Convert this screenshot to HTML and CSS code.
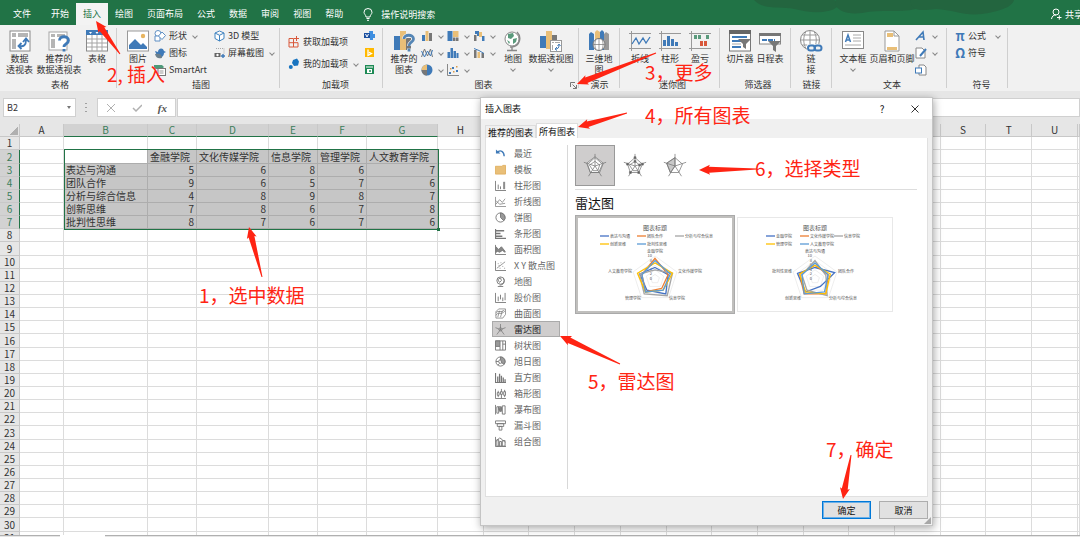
FILE: index.html
```html
<!DOCTYPE html>
<html lang="zh-CN">
<head>
    <meta charset="utf-8">
    <title>插入图表</title>
    <link rel="stylesheet" href="styles.css">
</head>
<body>
<header class="titlebar">
    <svg class="swirl" viewBox="0 0 330 25" width="330" height="25">
        <path d="M4 0h80c8 4 3 9-6 11-12 3-24 0-34-2-12-3-30 2-40-9z"/>
        <path d="M86 0h110c-5 5-16 8-30 9-18 4-34 0-54 4-12 2-30-2-26-13z"/>
        <path d="M160 0h104c-2 8-18 12-32 14-18 2-28-4-46-5-18 2-24 2-26-9z"/>
    </svg>
    <nav class="tabs">
        <a href="#" class="file">文件</a>
        <a href="#">开始</a>
        <a href="#" class="active">插入</a>
        <a href="#">绘图</a>
        <a href="#">页面布局</a>
        <a href="#">公式</a>
        <a href="#">数据</a>
        <a href="#">审阅</a>
        <a href="#">视图</a>
        <a href="#">帮助</a>
    </nav>
    <a href="#" class="tell-me">
        <svg width="10" height="13" viewBox="0 0 10 13" fill="none" stroke="#fff"><path d="M3 9C3 7 1 6 1 4.300a4 3.800 0 0 1 8 0C9 6 7 7 7 9zM3.500 10.500h3M4 12.300h2"/></svg>
        操作说明搜索
    </a>
    <a href="#" class="share">
        <svg width="11" height="12" viewBox="0 0 11 12" fill="none" stroke="#fff"><circle cx="5" cy="4" r="3"/><path d="M.5 11c.5-3 2-4 4.500-4M6 9.500h4.500M8.300 7.300v4.400"/></svg>
        共享
    </a>
</header>

<section class="ribbon">
    <div class="group g-table">
        <div class="tools">
            <button class="big w33">
                <svg width="22" height="22" viewBox="0 0 22 22"><rect x="1" y="1" width="20" height="20" fill="#fff" stroke="#8a8a8a"/><path d="M3 3h4v4H3zM9 3h10v4H9zM3 9h4v10H3z" fill="#b5b5b5"/><path d="M10 16c5 1 7-1 7-6M12.500 13l-3 3 3 3M14 12l3-3.500 3 3.500" fill="none" stroke="#3f7ab8" stroke-width="1.800"/></svg>
                <span>数据<br>透视表</span>
            </button>
            <button class="big w46">
                <svg width="22" height="22" viewBox="0 0 22 22"><rect x="1" y="2" width="18" height="18" fill="#fff" stroke="#a5a5a5"/><path d="M3 4h4v3H3zM9 4h8v3H9zM3 9h4v9H3z" fill="#b5b5b5"/><path d="M11.500 10.500c0-5 9-5 9 0 0 3.500-4.500 3-4.500 6.500M16 19v2.500" fill="none" stroke="#3f7ab8" stroke-width="2.800"/></svg>
                <span>推荐的<br>数据透视表</span>
            </button>
            <button class="big w30">
                <svg width="22" height="22" viewBox="0 0 22 22"><rect x=".5" y="1" width="21" height="20" fill="#fff" stroke="#8a8a8a"/><path d="M0 0h22v5H0z" fill="#3f7ab8"/><path d="M1 9h20M1 13h20M1 17h20M6 5v16M11 5v16M16 5v16" stroke="#a5a5a5"/><path d="M3 2l1.500 2L6 2zM9.500 2L11 4l1.500-2zM16 2l1.500 2L19 2z" fill="#fff"/></svg>
                <span>表格</span>
            </button>
        </div>
        <h2>表格</h2>
    </div>

    <div class="group g-picture">
        <div class="tools">
            <button class="big menu w32">
                <svg width="22" height="22" viewBox="0 0 22 22"><rect x=".5" y="1" width="21" height="20" fill="#fff" stroke="#999"/><path d="M2 19v-4l6-6 6 6 2-2 4 4v2z" fill="#3f7ab8"/><circle cx="16" cy="6" r="2.200" fill="#e8b560"/></svg>
                <span>图片</span>
            </button>
            <div class="stack col-shapes">
                <button class="small menu"><svg width="12" height="12" viewBox="0 0 12 12" fill="#fff" stroke="#5e8fc4"><circle cx="4" cy="3.500" r="3"/><path d="M1 6h5v5H1z"/><path d="M8 2l3.500 3.500L8 9.500 4.500 6z"/></svg>形状</button>
                <button class="small"><svg width="12" height="12" viewBox="0 0 12 12"><path d="M1 4l3 1c0-4 5-5 6-1l2 1-2 1c0 4-4 6-7 3z" fill="#3f7ab8"/><path d="M1 7c4-1 7 0 7 4-4 1-6 0-7-4z" fill="#6b7f8c"/></svg>图标</button>
                <button class="small"><svg width="12" height="12" viewBox="0 0 12 12"><path d="M0 1h8l2 2-2 2H0z" fill="#4f9a7a"/><rect x="4" y="4.500" width="7.500" height="7" fill="#fff" stroke="#777"/><path d="M5.500 7h4M5.500 9h4" stroke="#999"/></svg>SmartArt</button>
            </div>
            <div class="stack">
                <button class="small"><svg width="11" height="12" viewBox="0 0 11 12" fill="#fff" stroke="#3f83c0"><path d="M5.500 1l4.500 2v5.500l-4.500 2.500L1 8.500V3zM1 3l4.500 2.300L10 3M5.500 5.300V11"/></svg>3D 模型</button>
                <button class="small menu"><svg width="11" height="12" viewBox="0 0 11 12"><path d="M2 1.500h8v6" fill="none" stroke="#aaa" stroke-dasharray="1 1"/><path d="M.5 6h6v4h-6z" fill="#666"/><circle cx="3.500" cy="8" r="1.200" fill="#fff"/><path d="M7 9h4M9 7v4" stroke="#3f7ab8" stroke-width="1.400"/></svg>屏幕截图</button>
            </div>
        </div>
        <h2>插图</h2>
    </div>

    <div class="group g-addin">
        <div class="tools">
            <div class="stack roomy col-addin">
                <button class="small"><svg width="12" height="12" viewBox="0 0 12 12" fill="none" stroke="#d9583b"><path d="M1 2.500h4.500V11H1zM1 6.700h9V11H5.500M8.500 0v5M6 2.500h5"/></svg>获取加载项</button>
                <button class="small menu"><svg width="12" height="12" viewBox="0 0 12 12" fill="#1874c0"><path d="M5 2l4-1.500 2 3-1 4-4 .500-2-3z"/><circle cx="2.800" cy="9" r="2"/></svg>我的加载项</button>
            </div>
            <div class="stack">
                <button class="small" aria-label="Visio"><svg width="11" height="11" viewBox="0 0 11 11"><path d="M5 1h4v3h2v4H9v2H6z" fill="#3f8fe0"/><path d="M0 3h6v5H0z" fill="#1a4fa0"/><path d="M1.500 4L3 7l1.500-3" fill="none" stroke="#fff"/></svg></button>
                <button class="small" aria-label="Bing"><svg width="11" height="11" viewBox="0 0 11 11"><path d="M1 1h9v9H1z" fill="#ffb900"/><path d="M4 2.500v6l3.500-2L5 5.300" fill="none" stroke="#fff" stroke-width="1.300"/></svg></button>
                <button class="small" aria-label="人员图"><svg width="11" height="11" viewBox="0 0 11 11"><path d="M1 1h9v9H1z" fill="#1e8a55"/><path d="M2 3h7" stroke="#fff"/><path d="M3 5h5v4H3z" fill="#fff"/><circle cx="6" cy="7" r="1" fill="#1e8a55"/></svg></button>
            </div>
        </div>
        <h2>加载项</h2>
    </div>

    <div class="group g-chart">
        <div class="tools">
            <button class="big w32">
                <svg width="22" height="22" viewBox="0 0 22 22"><path d="M1 6h6v14H1z" fill="#3f7ab8"/><path d="M7 1h6v19H7z" fill="#e9bf78"/><path d="M13 8h5v12h-5z" fill="#777"/><path d="M11 9c0-5 9.500-5 9.500 0 0 3.500-4.500 3-4.500 7M16 18.500v3" fill="none" stroke="#f1f1f1" stroke-width="4"/><path d="M11 9c0-5 9.500-5 9.500 0 0 3.500-4.500 3-4.500 7M16 18.500v3" fill="none" stroke="#5485b5" stroke-width="2.800"/></svg>
                <span>推荐的<br>图表</span>
            </button>
            <div class="chart-kinds">
                <button class="small menu" aria-label="柱形图"><svg width="12" height="12" viewBox="0 0 12 12"><path d="M1 5h3v6H1z" fill="#3f7ab8"/><path d="M4.500 1h3v10h-3z" fill="#e9bf78"/><path d="M8 3h3v8H8z" fill="#777"/></svg></button>
                <button class="small menu" aria-label="层次结构图"><svg width="12" height="12" viewBox="0 0 12 12"><path d="M.5 1h5v10h-5z" fill="#3f7ab8"/><path d="M6 1h5.500v6H6z" fill="#e9bf78"/><path d="M6 7.500h2.500V11H6zM9 7.500h2.500V11H9z" fill="#777"/></svg></button>
                <button class="small menu" aria-label="瀑布图"><svg width="12" height="12" viewBox="0 0 12 12"><path d="M1 5h2.500v6H1z" fill="#777"/><path d="M2 1h4v5H4V4H2z" fill="#3f7ab8"/><path d="M6 2h3v5H6z" fill="#e9bf78"/><path d="M9 6h2.500v5H9z" fill="#3f7ab8"/></svg></button>
                <button class="small menu" aria-label="折线图"><svg width="12" height="12" viewBox="0 0 12 12" fill="none"><path d="M.5 10l3-8 3 7 3-7 2 8" stroke="#777"/><path d="M.5 4l3 6 3-6 3 5 2-6" stroke="#3f7ab8"/></svg></button>
                <button class="small menu" aria-label="统计图"><svg width="12" height="12" viewBox="0 0 12 12"><path d="M.5 5H3v6H.500zM3.500 1H6v10H3.500zM6.500 4H9v7H6.500zM9.500 6h2v5h-2z" fill="#3f7ab8"/></svg></button>
                <button class="small menu" aria-label="组合图"><svg width="12" height="12" viewBox="0 0 12 12"><path d="M1 3h2.500v8H1zM8.500 6H11v5H8.500z" fill="#777"/><path d="M4.500 5H7v6H4.500z" fill="#e9bf78"/><path d="M1 1.500l5 2 5 3" fill="none" stroke="#3f7ab8"/></svg></button>
                <button class="small menu" aria-label="饼图"><svg width="12" height="12" viewBox="0 0 12 12"><circle cx="6" cy="6" r="5.500" fill="#3f7ab8"/><path d="M6 6V.500A5.500 5.500 0 0 0 .500 6z" fill="#e9bf78"/><path d="M6 6H.500A5.500 5.500 0 0 0 6 11.500z" fill="#777"/></svg></button>
                <button class="small menu" aria-label="散点图"><svg width="12" height="12" viewBox="0 0 12 12"><path d="M.5 0v11.500H12" fill="none" stroke="#888"/><path d="M2 8h2v2H2zM5 3h2v2H5zM9 6h2v2H9z" fill="#3f7ab8"/><path d="M3 4h1.500v1.500H3zM6 7h1.500v1.500H6zM9 2h1.500v1.500H9z" fill="#d99a48"/></svg></button>
            </div>
            <button class="big menu w28">
                <svg width="22" height="22" viewBox="0 0 22 22"><circle cx="10" cy="9" r="7" fill="#fff" stroke="#888"/><path d="M6 4l5-1 1 3-3 3-3-1zM11 9l4-1-1 4-3 2zM5 10l3 2-1 2z" fill="#5a9a7c"/><path d="M15 2c5 5 3 14-5 15H8M10 17v3M5 20.500h10" fill="none" stroke="#888" stroke-width="1.400"/></svg>
                <span>地图</span>
            </button>
            <button class="big menu w48">
                <svg width="24" height="22" viewBox="0 0 24 22"><path d="M1 6h6v12H1z" fill="#3f7ab8"/><path d="M7 1h6v18H7z" fill="#e9bf78"/><path d="M13 5h5v7h-5z" fill="#777"/><rect x="11.500" y="10.500" width="11" height="11" fill="#fff" stroke="#999"/><path d="M13 12.500h2M16 12.500h5M13.500 15v5" stroke="#aaa"/><path d="M16 19c3 0 4-1 4-4M18 17l-2 2 2 1.500M18.500 16l1.500-2 1.500 2" fill="none" stroke="#3f7ab8"/></svg>
                <span>数据透视图</span>
            </button>
        </div>
        <h2>图表</h2>
        <button class="launcher" aria-label="查看所有图表"><svg width="7" height="7" viewBox="0 0 7 7" fill="none" stroke="#777"><path d="M.5 5V.500H5M2.500 2.500l4 4M6.500 3v3.500H3"/></svg></button>
    </div>

    <div class="group g-tour">
        <div class="tools">
            <button class="big w40">
                <svg width="22" height="22" viewBox="0 0 22 22"><path d="M1 4l2-2 3 2v16H1z" fill="#3f7ab8"/><path d="M7 2l2-2 3 2v16H7z" fill="#e9bf78"/><path d="M12 2l2-2 2 2v18h-4z" fill="#3f7ab8"/><path d="M16 4l2-2 3 2v16h-5z" fill="#999"/><circle cx="11" cy="14.500" r="6" fill="#fff" stroke="#777"/><path d="M5 14.500h12M11 8.500v12M8 9.500c-1.500 3-1.500 7 0 10M14 9.500c1.500 3 1.500 7 0 10" fill="none" stroke="#777" stroke-width=".7"/></svg>
                <span>三维地<br>图</span>
            </button>
        </div>
        <h2>演示</h2>
    </div>

    <div class="group g-spark">
        <div class="tools">
            <button class="big w30">
                <svg width="22" height="22" viewBox="0 0 22 22" fill="none"><path d="M2.500 1v20M0 3.500h22M0 18.500h22" stroke="#999"/><path d="M3 14l4-6 3 6 4-6 3 5 4-6" stroke="#3f7ab8" stroke-width="1.300"/></svg>
                <span>折线</span>
            </button>
            <button class="big w30">
                <svg width="22" height="22" viewBox="0 0 22 22"><path d="M2.500 1v20M0 3.500h22M0 18.500h22" stroke="#999"/><path d="M4 10h3v6H4zM8 6h3v10H8zM12 9h3v7h-3zM16 12h3v4h-3z" fill="#3f7ab8"/></svg>
                <span>柱形</span>
            </button>
            <button class="big w30">
                <svg width="22" height="22" viewBox="0 0 22 22"><path d="M2.500 1v20M0 3.500h22M0 18.500h22" stroke="#999"/><path d="M5 5h3v4H5zM9 5h3v4H9zM17 5h3v4h-3z" fill="#5a9a7c"/><path d="M11 11h3v5h-3zM15 11h3v5h-3z" fill="#d9583b"/></svg>
                <span>盈亏</span>
            </button>
        </div>
        <h2>迷你图</h2>
    </div>

    <div class="group g-filter">
        <div class="tools">
            <button class="big w30">
                <svg width="22" height="22" viewBox="0 0 22 22"><rect x=".5" y="1" width="21" height="20" fill="#fff" stroke="#777"/><path d="M0 0h22v4H0z" fill="#666"/><path d="M3 7h15M3 11h9M3 17h9" stroke="#3f7ab8" stroke-width="2"/><path d="M3 14h9" stroke="#aaa"/><path d="M9 9h13l-5 5v5l-3-2v-3z" fill="#777"/></svg>
                <span>切片器</span>
            </button>
            <button class="big w30">
                <svg width="22" height="22" viewBox="0 0 22 22"><rect x=".5" y="5" width="21" height="9" fill="#fff" stroke="#888"/><path d="M0 3h22v3H0z" fill="#777"/><path d="M3 10h13" stroke="#3f7ab8" stroke-width="2" stroke-dasharray="5 1"/><path d="M9 11h13l-5 5v6l-3-2v-4z" fill="#777"/></svg>
                <span>日程表</span>
            </button>
        </div>
        <h2>筛选器</h2>
    </div>

    <div class="group g-link">
        <div class="tools">
            <button class="big w40">
                <svg width="24" height="22" viewBox="0 0 24 22" fill="none"><circle cx="11" cy="10" r="9.500" fill="#fff" stroke="#888"/><path d="M1.500 10h19M11 .500v19M3.500 5h15M3.500 15h15M7 1.500c-3 5-3 12 0 17M15 1.500c3 5 3 12 0 17" stroke="#999"/><path d="M8 14h16v8H8z" fill="#f1f1f1"/><rect x="9" y="15.500" width="7" height="5" rx="2.500" stroke="#3f7ab8" stroke-width="2"/><rect x="15.500" y="15.500" width="7" height="5" rx="2.500" stroke="#3f7ab8" stroke-width="2"/></svg>
                <span>链<br>接</span>
            </button>
        </div>
        <h2>链接</h2>
    </div>

    <div class="group g-text">
        <div class="tools">
            <button class="big menu w32">
                <svg width="22" height="22" viewBox="0 0 22 22"><rect x=".5" y="1.500" width="21" height="17" fill="#fff" stroke="#888"/><path d="M3.500 12l2.500-7 2.500 7M4.500 10h3" fill="none" stroke="#3f7ab8" stroke-width="1.500"/><path d="M11 5h8M11 8h8M11 11h8M3 15h16" stroke="#aaa"/></svg>
                <span>文本框</span>
            </button>
            <button class="big w46">
                <svg width="22" height="22" viewBox="0 0 22 22"><path d="M4 1h9l5 5v15H4z" fill="#fff" stroke="#999"/><path d="M6 3h6v4H6zM6 17h10v3H6z" fill="#e9bf78"/><path d="M13 1v5h5" fill="none" stroke="#999"/></svg>
                <span>页眉和页脚</span>
            </button>
            <div class="stack">
                <button class="small menu" aria-label="艺术字"><svg width="12" height="12" viewBox="0 0 12 12" fill="none" stroke="#3f7ab8"><path d="M1 10l7-8 1 8M4 7h5" stroke-width="1.600"/></svg></button>
                <button class="small menu" aria-label="签名行"><svg width="12" height="12" viewBox="0 0 12 12"><path d="M1 1h6l3 3v7H1z" fill="#fff" stroke="#888"/><path d="M5 9l6-7" stroke="#3f7ab8" stroke-width="2"/></svg></button>
                <button class="small" aria-label="对象"><svg width="12" height="12" viewBox="0 0 12 12"><path d="M4 1h5l2 2v8H4z" fill="#fff" stroke="#888"/><rect x=".5" y="4" width="6" height="5" fill="#fff" stroke="#3f7ab8"/></svg></button>
            </div>
        </div>
        <h2>文本</h2>
    </div>

    <div class="group g-symbol">
        <div class="tools">
            <div class="stack">
                <button class="small menu wide"><b>π</b>公式</button>
                <button class="small"><b>Ω</b>符号</button>
            </div>
        </div>
        <h2>符号</h2>
    </div>
</section>

<section class="formula-bar">
    <div class="name-box"><input type="text" value="B2" aria-label="名称框"></div>
    <div class="dots"></div>
    <div class="fx">
        <button aria-label="取消"><svg width="10" height="10" viewBox="0 0 10 10" stroke="#b0b0b0"><path d="M1 1l8 8M9 1L1 9"/></svg></button>
        <button aria-label="输入"><svg width="10" height="10" viewBox="0 0 10 10" fill="none" stroke="#b0b0b0" stroke-width="1.500"><path d="M1 5l3 3 6-6"/></svg></button>
        <button class="fn">fx</button>
    </div>
    <input type="text" class="formula" aria-label="编辑栏">
</section>

<main class="sheet">
    <table id="grid"></table>
    <div class="selection"></div>
</main>
<footer class="sheet-tabs"><span></span></footer>

<div class="dialog" role="dialog" aria-label="插入图表">
    <div class="dialog-title">
        <span>插入图表</span>
        <button aria-label="帮助">?</button>
        <button aria-label="关闭"><svg width="8" height="8" viewBox="0 0 8 8" stroke="#333"><path d="M.5.500l7 7M7.500.500l-7 7"/></svg></button>
    </div>
    <div class="dialog-tabs">
        <button>推荐的图表</button>
        <button class="active">所有图表</button>
    </div>
    <div class="panel">
        <ul class="kinds">
            <li><button><svg viewBox="0 0 12 12"><path d="M2 5c4-4 8-1 8 4" stroke="#3f7ab8" stroke-width="1.500"/><path d="M1 1.500V6h5z" fill="#3f7ab8" stroke="none"/></svg>最近</button></li>
            <li><button><svg viewBox="0 0 12 12"><path d="M.5 2.500h7l1-1h3v9.500H.500z" fill="#e9bf78" stroke="#e0b060"/></svg>模板</button></li>
            <li><button><svg viewBox="0 0 12 12"><path d="M.5 1v10.500H12M3.500 5v5M6 7v3M9.500 2v8"/><path d="M10.500 2v8"/></svg>柱形图</button></li>
            <li><button><svg viewBox="0 0 12 12"><path d="M.5 1v10.500H12M1 9l4-5 3 3 3-4M1 5l4 4 6-1" stroke-width=".8"/></svg>折线图</button></li>
            <li><button><svg viewBox="0 0 12 12"><circle cx="6" cy="6" r="5"/><path d="M6 6V1a5 5 0 0 1 3.500 8.500z" fill="#999"/></svg>饼图</button></li>
            <li><button><svg viewBox="0 0 12 12"><path d="M.5 1v10.500H12M1 3h9M1 6h5M1 9h7" stroke-width="1.500"/></svg>条形图</button></li>
            <li><button><svg viewBox="0 0 12 12"><path d="M.5 1v10.500H12"/><path d="M1 9V3l3 3 3-3 4 5v1L8 7 5 9 3 8z" fill="#888"/></svg>面积图</button></li>
            <li><button><svg viewBox="0 0 12 12"><path d="M.5 1v10.500H12"/><path d="M2 9l9-7M3 4h1M6 3h1M5 9h1M8 7h1M10 9h1M4 6h1" stroke-width=".8"/></svg>X Y 散点图</button></li>
            <li><button><svg viewBox="0 0 12 12"><circle cx="6" cy="5" r="4"/><path d="M3 4l3-2 1 3-2 2zM9 2c3 4 0 8-4 8M3 11.500h6"/></svg>地图</button></li>
            <li><button><svg viewBox="0 0 12 12"><path d="M.5 1v10.500H12M3.500 5v5M6 3v5M8.500 6v4M11 1v8"/></svg>股价图</button></li>
            <li><button><svg viewBox="0 0 12 12"><path d="M1 4l3-3h7.500v6l-3 4H1zM1 8c3-5 5 1 10-5M1 5c3-3 6 1 9-3M3 10l2-7M6 10l2-7" stroke-width=".8"/></svg>曲面图</button></li>
            <li><button class="active"><svg viewBox="0 0 12 12"><path d="M6 0v6L.500 4M6 6l5.500-2M6 6l-4 5.500M6 6l4 5.500M6 3.500l2 2-1 2H5l-1-2z" stroke-width=".8"/></svg>雷达图</button></li>
            <li><button><svg viewBox="0 0 12 12"><path d="M.5 1h11v10H.500z"/><path d="M.5 1h5v6h-5z" fill="#999"/><path d="M5.500 7v4M8.500 1v10M8.500 4.500h3"/></svg>树状图</button></li>
            <li><button><svg viewBox="0 0 12 12"><circle cx="6" cy="6" r="5"/><circle cx="6" cy="6" r="2"/><path d="M6 1a5 5 0 0 1 4 8L7.500 7.500 6 4z" fill="#999"/><path d="M1 6h3M3 10l2-2"/></svg>旭日图</button></li>
            <li><button><svg viewBox="0 0 12 12"><path d="M.5 1v10.500H12M3 5v6M5 2v9M7 4v7M9 6v5M11 8v3" stroke-width="1.400"/></svg>直方图</button></li>
            <li><button><svg viewBox="0 0 12 12"><path d="M.5 1v10.500H12M3.500 3v7M7 1v10M10.500 2v8"/><path d="M2.500 5h2v3h-2zM6 4h2v3H6zM9.500 4h2v4h-2z" fill="#fff"/></svg>箱形图</button></li>
            <li><button><svg viewBox="0 0 12 12"><path d="M.5 1v10.500M2 3h2v7H2zM4 3h3v3H4zM8 2h3v9H8z"/><path d="M5 4h2v4H5z" fill="#888"/></svg>瀑布图</button></li>
            <li><button><svg viewBox="0 0 12 12"><path d="M.5 1h11v3H.500zM2.500 4h7v3h-7zM4.500 7h3v4h-3z"/></svg>漏斗图</button></li>
            <li><button><svg viewBox="0 0 12 12"><path d="M.5 1v10.500H12M2 4h2v7H2zM5 6h2v5H5zM8 5h3v6H8zM1 6l4-4 3 2 3 3"/></svg>组合图</button></li>
        </ul>
        <div class="detail">
            <div class="types">
                <button class="active" aria-label="雷达图"><svg viewBox="0 0 28 28"><path d="M14 4l9 7-4 10H9L5 11z" fill="#fff"/><path d="M14 1v13M14 14L2 10M14 14l12-4M14 14L7 25M14 14l7 11M14 5l8 7-4 9H9l-3-9zM14 9l5 4-2 6h-5l-4-6z"/></svg></button>
                <button aria-label="带数据标记的雷达图"><svg viewBox="0 0 28 28"><path d="M14 1v13M14 14L2 10M14 14l12-4M14 14L7 25M14 14l7 11M14 5l8 7-4 9H9l-3-9zM14 9l5 4-2 6h-5l-4-6z"/><path d="M13 4h2v2h-2zM21 11h2v2h-2zM17 20h2v2h-2zM8 20h2v2H8zM5 11h2v2H5zM13 8h2v2h-2zM18 12h2v2h-2z" fill="#555"/></svg></button>
                <button aria-label="填充雷达图"><svg viewBox="0 0 28 28"><path d="M14 5v9l-5 7-4-10z" fill="#c8c8c8"/><path d="M14 1v13M14 14L2 10M14 14l12-4M14 14L7 25M14 14l7 11M14 5l8 7-4 9H9l-4-10z"/></svg></button>
            </div>
            <h3>雷达图</h3>
            <div class="previews">
                <button class="active" aria-label="按学院"><svg id="radar1" viewBox="0 0 154 93"></svg></button>
                <button aria-label="按能力"><svg id="radar2" viewBox="0 0 154 93"></svg></button>
            </div>
        </div>
    </div>
    <div class="dialog-buttons">
        <button class="primary">确定</button>
        <button>取消</button>
    </div>
    <div class="grip"></div>
</div>

<svg id="arrows" width="1080" height="537"></svg>
<div class="note n1">1，选中数据</div>
<div class="note n2">2, 插入</div>
<div class="note n3">3，更多</div>
<div class="note n4">4，所有图表</div>
<div class="note n5">5，雷达图</div>
<div class="note n6">6，选择类型</div>
<div class="note n7">7，确定</div>

<script src="script.js"></script>
</body>
</html>
```

FILE: styles.css
```css
* {
  box-sizing: border-box;
}

body {
  margin: 0;
  height: 100vh;
  display: flex;
  flex-direction: column;
  position: relative;
  overflow: hidden;
  background-color: #e6e6e6;
  color: #333;
  font-family: "Noto Sans CJK SC", "Noto Sans", sans-serif;
  font-size: 9px;
  line-height: 11px;
}

button, input {
  font: inherit;
  color: inherit;
  border: 0;
  padding: 0;
  margin: 0;
  background: none;
}

h2, h3, ul {
  margin: 0;
  padding: 0;
  font-weight: normal;
  list-style: none;
}

svg {
  flex: none;
  display: block;
}

a {
  color: #fff;
  text-decoration: none;
}

/* title bar */
.titlebar {
  flex: none;
  display: flex;
  align-items: flex-end;
  height: 25px;
  padding-left: 6px;
  position: relative;
  overflow: hidden;
  background-color: #217346;
}

.swirl {
  position: absolute;
  right: 0;
  top: 0;
  fill: #23653f;
}

.tabs {
  display: flex;
}

.tabs a {
  padding: 0 7px;
  line-height: 22px;
}

.tabs .file {
  margin-right: 6px;
}

.tabs .active {
  background-color: #f3f3f3;
  color: #217346;
}

.tell-me, .share {
  display: flex;
  align-items: center;
  gap: 8px;
  height: 22px;
  margin-left: 13px;
  white-space: nowrap;
  position: relative;
}

.share {
  gap: 3px;
  margin-left: auto;
  margin-right: -3px;
}

/* ribbon */
.ribbon {
  flex: none;
  display: flex;
  height: 66px;
  background-color: #f1f1f1;
}

.group {
  flex: none;
  display: flex;
  flex-direction: column;
  position: relative;
}

.group::after {
  content: "";
  position: absolute;
  right: 0;
  top: 3px;
  bottom: 3px;
  border-right: 1px solid #cfcfcf;
}

.group h2 {
  font-size: 9px;
  text-align: center;
}

.tools {
  display: flex;
  height: 54px;
}

.g-table { width: 117px; padding-left: 3px; }
.g-picture { width: 163px; padding-left: 5px; }
.g-addin { width: 103px; padding-left: 8px; }
.g-chart { width: 196px; padding-left: 5px; }
.g-tour { width: 41px; }
.g-spark { width: 100px; padding-left: 5px; }
.g-filter { width: 71px; padding-left: 5px; }
.g-link { width: 41px; }
.g-text { width: 115px; padding-left: 5px; }
.g-symbol { width: 61px; padding-left: 8px; }

.w28 { width: 28px; }
.w30 { width: 30px; }
.w32 { width: 32px; }
.w33 { width: 33px; }
.w40 { width: 40px; }
.w46 { width: 46px; }
.w48 { width: 48px; }

.big {
  display: flex;
  flex-direction: column;
  align-items: center;
  gap: 1px;
  padding-top: 5px;
  white-space: nowrap;
}

.small {
  display: flex;
  align-items: center;
  gap: 3px;
  height: 17px;
  white-space: nowrap;
}

.small b {
  width: 10px;
  color: #3f7ab8;
  font-size: 13px;
}

.menu::after {
  content: "";
  width: 3px;
  height: 3px;
  margin: 0 3px;
  border: solid #888;
  border-width: 0 1px 1px 0;
  transform: rotate(45deg);
}

.big.menu::after {
  margin-top: 2px;
}

.wide::after {
  margin-left: 7px;
}

.stack {
  padding-top: 2px;
}

.roomy {
  display: flex;
  flex-direction: column;
  gap: 5px;
  padding-top: 8px;
}

.col-shapes { width: 60px; }
.col-addin { width: 76px; }

.chart-kinds {
  display: grid;
  grid-template-columns: repeat(3, 26px);
  grid-auto-rows: 17px;
  padding-top: 2px;
  margin-left: 1px;
}

.launcher {
  position: absolute;
  right: 2px;
  bottom: 2px;
}

/* formula bar */
.formula-bar {
  flex: none;
  display: flex;
  height: 33px;
  padding: 7px 0;
}

.name-box {
  display: flex;
  align-items: center;
  width: 73px;
  margin-left: 3px;
  border: 1px solid #d0d0d0;
  background-color: #fff;
}

.name-box input {
  width: 63px;
  padding-left: 3px;
}

.name-box::after {
  content: "";
  border: 2px solid transparent;
  border-top: 3px solid #777;
  border-bottom: 0;
}

.dots {
  width: 2px;
  margin: 5px 10px 5px 9px;
  background: repeating-linear-gradient(#a0a0a0 0 1px, transparent 1px 4px);
}

.fx {
  display: flex;
  align-items: center;
  justify-content: space-between;
  width: 79px;
  padding: 0 8px;
  border: 1px solid #d0d0d0;
  background-color: #fff;
}

.fn {
  font: italic bold 11px "Liberation Serif", serif;
  color: #555;
}

.formula {
  flex: 1;
  min-width: 0;
  margin-left: 1px;
  border: 1px solid #d0d0d0;
  background-color: #fff;
}

/* sheet */
.sheet {
  flex: 1;
  min-height: 0;
  position: relative;
  overflow: hidden;
  background-color: #fff;
}

#grid {
  width: 100%;
  table-layout: fixed;
  border-spacing: 0;
  font-size: 10px;
  line-height: 12px;
  color: #333;
}

#grid tr {
  height: 13px;
}

#grid tbody tr:nth-child(7n + 2) {
  height: 14px;
}

#grid th, #grid td {
  padding: 0;
  border: solid #dcdcdc;
  border-width: 0 1px 1px 0;
  font-weight: normal;
  white-space: nowrap;
}

#grid th {
  background-color: #e6e6e6;
  border-color: #c8c8c8;
}

#grid .corner {
  background: linear-gradient(135deg, transparent 50%, #b0b0b0 50%) 10px 3px / 8px 8px no-repeat #e6e6e6;
}

#grid .on {
  background-color: #d2d2d2;
  color: #3b7d5b;
}

#grid thead .on {
  border-bottom-color: #217346;
}

#grid tbody .on {
  border-right-color: #217346;
}

#grid .sel {
  background-color: #c6c6c6;
  border-color: #adadad;
  padding: 0 2px;
}

#grid .cur {
  background-color: #fff;
}

#grid .num {
  text-align: right;
}

.selection {
  position: absolute;
  left: 64px;
  top: 25px;
  width: 375px;
  height: 81px;
  border: 1px solid #217346;
}

.selection::after {
  content: "";
  position: absolute;
  right: -2px;
  bottom: -2px;
  width: 3px;
  height: 3px;
  background-color: #217346;
}

.sheet-tabs {
  flex: none;
  height: 2px;
  border-top: 1px solid #b0b0b0;
}

.sheet-tabs span {
  display: block;
  width: 45px;
  height: 2px;
  margin: -1px 0 0 60px;
  background-color: #fff;
}

/* dialog */
.dialog {
  position: absolute;
  left: 480px;
  top: 97px;
  width: 453px;
  display: flex;
  flex-direction: column;
  padding: 0 4px 6px;
  border: 1px solid #c4c4c4;
  background-color: #f0f0f0;
  box-shadow: 1px 2px 8px rgba(0, 0, 0, 0.35);
}

.dialog-title {
  display: flex;
  align-items: center;
  height: 21px;
  margin: 0 -4px;
  padding: 0 4px;
  background-color: #fff;
  color: #111;
}

.dialog-title span {
  flex: 1;
}

.dialog-title button {
  display: flex;
  justify-content: center;
  width: 18px;
  margin: 0 4px 0 11px;
  font-size: 10px;
}

.dialog-tabs {
  display: flex;
  align-items: flex-end;
  height: 19px;
  padding-top: 4px;
  color: #111;
}

.dialog-tabs button {
  height: 13px;
  padding: 0 2px;
  border: 1px solid #ddd;
  border-bottom: 0;
}

.dialog-tabs .active {
  height: 15px;
  background-color: #fff;
}

.panel {
  display: flex;
  height: 359px;
  padding: 7px 10px 7px 6px;
  border: 1px solid #e0e0e0;
  border-top: 0;
  background-color: #fff;
}

.kinds {
  width: 76px;
  border-right: 1px solid #d8d8d8;
  color: #666;
}

.kinds button {
  display: flex;
  align-items: center;
  gap: 8px;
  width: 68px;
  height: 16px;
  padding-left: 2px;
  border: 1px solid transparent;
}

.kinds .active {
  border-color: #aaa;
  background-color: #cfcdcd;
  color: #222;
}

.kinds svg {
  width: 11px;
  height: 11px;
  fill: none;
  stroke: #777;
}

.detail {
  flex: 1;
  padding-left: 7px;
}

.types {
  display: flex;
  height: 45px;
  border-bottom: 1px solid #ddd;
}

.types button {
  display: flex;
  align-items: center;
  justify-content: center;
  width: 40px;
  height: 41px;
  border: 1px solid transparent;
}

.types .active {
  border-color: #999;
  background-color: #cfcdcd;
}

.types svg {
  width: 26px;
  height: 26px;
  fill: none;
  stroke: #777;
  stroke-width: 0.8;
}

h3 {
  padding: 5px 0 4px;
  color: #111;
  font-size: 13px;
  line-height: 16px;
}

.previews {
  display: flex;
  align-items: center;
  gap: 2px;
}

.previews button {
  border: 1px solid #e8e8e8;
}

.previews .active {
  border: 3px solid #c0bfbd;
  outline: 1px solid #aaa;
  outline-offset: -1px;
}

.previews svg {
  width: 154px;
  height: 93px;
  font-size: 4px;
}

.previews text {
  fill: #555;
}

.previews .chart-title {
  font-size: 6px;
}

.dialog-buttons {
  display: flex;
  justify-content: flex-end;
  gap: 8px;
  padding-top: 4px;
  color: #111;
}

.dialog-buttons button {
  width: 49px;
  height: 18px;
  border: 1px solid #adadad;
  background-color: #e1e1e1;
}

.dialog-buttons .primary {
  border-color: #0078d7;
  outline: 1px solid #6cb0e8;
  outline-offset: -2px;
}

.grip {
  position: absolute;
  right: 1px;
  bottom: 1px;
  width: 7px;
  height: 7px;
  background: radial-gradient(#a8a8a8 1px, transparent 1px) 0 0 / 2px 2px;
  clip-path: polygon(100% 0, 100% 100%, 0 100%);
}

/* step notes */
#arrows {
  position: absolute;
  left: 0;
  top: 0;
  fill: #ff2413;
  pointer-events: none;
}

.note {
  position: absolute;
  color: #ff2413;
  font-size: 19px;
  line-height: 24px;
  white-space: nowrap;
}

.n1 { left: 199px; top: 283px; }
.n2 { left: 107px; top: 62px; }
.n3 { left: 645px; top: 60px; }
.n4 { left: 645px; top: 103px; }
.n5 { left: 588px; top: 369px; }
.n6 { left: 755px; top: 156px; }
.n7 { left: 826px; top: 437px; }
```

FILE: script.js
```js
const colleges = ["金融学院", "文化传媒学院", "信息学院", "管理学院", "人文教育学院"];
const skills = ["表达与沟通", "团队合作", "分析与综合信息", "创新思维", "批判性思维"];
const scores = [
    [5, 6, 8, 6, 7],
    [9, 6, 5, 7, 6],
    [4, 8, 9, 8, 7],
    [7, 8, 6, 7, 8],
    [8, 7, 6, 7, 6]
];
const colors = ["#4472c4", "#ed7d31", "#a5a5a5", "#ffc000", "#5b9bd5"];

// Sheet: A-G have their own widths, H-U share the rest, V is cut off
function drawGrid() {
    const letters = "ABCDEFGHIJKLMNOPQRSTUV".split("");
    const widths = [20, 44, 84, 49, 72, 49, 49, 71];
    let html = "<colgroup>";
    for (let c = 0; c <= letters.length; c++) {
        const w = c === letters.length ? 2 : widths[c];
        html += w ? `<col style="width:${w}px">` : "<col>";
    }
    html += "</colgroup><thead><tr><th class='corner'></th>";
    letters.forEach((l, i) => {
        html += `<th class="${i >= 1 && i <= 6 ? "on" : ""}">${l === "V" ? "" : l}</th>`;
    });
    html += "</tr></thead><tbody>";
    for (let r = 1; r <= 31; r++) {
        const inRow = r >= 2 && r <= 7;
        html += `<tr><th class="${inRow ? "on" : ""}">${r}</th>`;
        letters.forEach((l, i) => {
            let cls = "", text = "";
            if (inRow && i >= 1 && i <= 6) {
                cls = "sel";
                if (r === 2 && i === 1) cls = "sel cur";
                else if (r === 2) text = colleges[i - 2];
                else if (i === 1) text = skills[r - 3];
                else {
                    text = scores[r - 3][i - 2];
                    cls = "sel num";
                }
            }
            html += `<td class="${cls}">${text}</td>`;
        });
        html += "</tr>";
    }
    document.getElementById("grid").innerHTML = html + "</tbody>";
}

function pentagon(values, cx, cy, r) {
    return values.map((v, i) => {
        const a = -Math.PI / 2 + i * 2 * Math.PI / 5;
        return (cx + Math.cos(a) * r * v / 10).toFixed(1) + "," + (cy + Math.sin(a) * r * v / 10).toFixed(1);
    }).join(" ");
}

function drawRadar(id, axes, series, rows, legendX) {
    const cx = 77, cy = 61, r = 23;
    let s = `<text class="chart-title" x="77" y="12" text-anchor="middle">图表标题</text>`;
    series.forEach((name, i) => {
        const x = legendX[i % 3], y = i < 3 ? 18 : 26;
        s += `<path d="M${x} ${y}h9" stroke="${colors[i]}" stroke-width="1.3"/><text x="${x + 10}" y="${y + 2}">${name}</text>`;
    });
    [2, 4, 6, 8, 10].forEach(v => {
        s += `<polygon points="${pentagon([v, v, v, v, v], cx, cy, r)}" fill="none" stroke="#ddd" stroke-width=".5"/>`;
        s += `<text x="74" y="${cy - r * v / 10 + 1}" text-anchor="end">${v}</text>`;
    });
    s += `<text x="74" y="${cy + 1}" text-anchor="end">0</text>`;
    rows.forEach((row, i) => {
        s += `<polygon points="${pentagon(row, cx, cy, r)}" fill="none" stroke="${colors[i]}" stroke-width="1.3"/>`;
    });
    const spots = [[77, 35, "middle"], [100, 55, "start"], [91, 82, "start"], [63, 82, "end"], [54, 55, "end"]];
    axes.forEach((name, i) => {
        s += `<text x="${spots[i][0]}" y="${spots[i][1]}" text-anchor="${spots[i][2]}">${name}</text>`;
    });
    document.getElementById(id).innerHTML = s;
}

// Tapered arrows: tip x, tip y, tail x, tail y
const arrows = [
    [249, 227, 262, 277],
    [96, 21, 120, 54],
    [577, 84, 656, 53],
    [578, 127, 627, 113],
    [560, 336, 620, 364],
    [699, 170, 757, 169],
    [843, 499, 851, 455]
];

function drawArrows() {
    document.getElementById("arrows").innerHTML = arrows.map(([x, y, tx, ty]) => {
        const len = Math.hypot(tx - x, ty - y);
        const ux = (tx - x) / len, uy = (ty - y) / len;
        const at = (d, w) => (x + ux * d - uy * w).toFixed(1) + "," + (y + uy * d + ux * w).toFixed(1);
        return `<polygon points="${[at(0, 0), at(11, 5), at(10, 3), at(len, 0.5), at(len, -0.5), at(10, -3), at(11, -5)].join(" ")}"/>`;
    }).join("");
}

drawGrid();
drawRadar("radar1", colleges, skills, scores, [22, 59, 97]);
drawRadar("radar2", skills, colleges, colleges.map((c, i) => scores.map(row => row[i])), [28, 62, 96]);
drawArrows();
```
